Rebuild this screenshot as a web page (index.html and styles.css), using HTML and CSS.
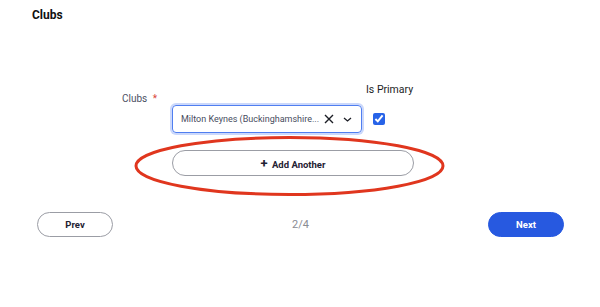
FILE: index.html
```html
<!DOCTYPE html>
<html lang="en">
<head>
  <meta charset="UTF-8" />
  <meta name="viewport" content="width=device-width, initial-scale=1.0" />
  <title>Clubs</title>
  <link rel="stylesheet" href="styles.css">
</head>
<body>
  <h2 class="page-title">Clubs</h2>

  <div class="club-grid">
    <div class="col-head">Is Primary</div>

    <label class="field-label" for="club">Clubs <span class="req">*</span></label>
    <div class="select-box" id="club">
      <span class="select-value">Milton Keynes (Buckinghamshire...</span>
      <svg class="icon-clear" width="10" height="10" viewBox="0 0 10 10">
        <path d="M1 1 L9 9 M9 1 L1 9" stroke="#1c1e26" stroke-width="1.4" fill="none" />
      </svg>
      <svg class="icon-chevron" width="9" height="5" viewBox="0 0 9 5">
        <path d="M1 1 L4.5 4 L8 1" stroke="#1c1e26" stroke-width="1.3" fill="none" />
      </svg>
    </div>
    <div class="primary-cell">
      <input type="checkbox" class="primary-check" checked />
    </div>

    <div class="add-wrap">
      <button type="button" class="add-btn"><span class="plus">+</span> Add Another</button>
      <svg class="highlight" width="312" height="62" viewBox="0 0 312 62">
        <ellipse cx="155.5" cy="31" rx="153.5" ry="28.5" fill="none" stroke="#e0361e" stroke-width="3" />
      </svg>
    </div>
  </div>

  <div class="pager">
    <button type="button" class="btn btn-prev">Prev</button>
    <span class="step">2/4</span>
    <button type="button" class="btn btn-next">Next</button>
  </div>
</body>
</html>
```

FILE: styles.css
```css
body {
  margin: 0;
  font-family: Roboto, "Liberation Sans", sans-serif;
  background: #ffffff;
  color: #1c1e26;
}

.page-title {
  margin: 0;
  padding: 7px 32px 0;
  font-size: 12px;
  line-height: 16px;
  font-weight: 700;
  color: #111;
}

.club-grid {
  display: grid;
  grid-template-columns: 172px 190px 60px;
  row-gap: 8px;
  margin-top: 60px;
}

.col-head {
  grid-column: 3;
  padding-left: 4px;
  font-size: 10.5px;
  line-height: 14px;
  color: #1c1e26;
  white-space: nowrap;
}

.field-label {
  grid-column: 1;
  justify-self: end;
  margin-top: -13px;
  padding-right: 15px;
  font-size: 10px;
  line-height: 13px;
  color: #4b5063;
}

.req {
  color: #d9453a;
  margin-left: 3px;
}

.select-box {
  grid-column: 2;
  height: 28px;
  box-sizing: border-box;
  display: flex;
  align-items: center;
  padding: 0 9px 0 8px;
  border: 1.5px solid #4f7ef0;
  border-radius: 4px;
  box-shadow: 0 0 0 2px #cbd8fb;
}

.select-value {
  flex: 1;
  font-size: 9px;
  color: #474c5e;
  white-space: nowrap;
}

.icon-clear {
  margin-left: 4px;
}

.icon-chevron {
  margin-left: 9px;
}

.primary-cell {
  grid-column: 3;
  display: flex;
  align-items: center;
  padding-left: 11px;
}

.primary-check {
  margin: 0;
  width: 12px;
  height: 12px;
  accent-color: #2763e8;
}

.add-wrap {
  grid-column: 2 / 4;
  position: relative;
  margin-top: 9px;
}

.add-btn {
  width: 242px;
  height: 26px;
  border: 1px solid #9b9da5;
  border-radius: 13px;
  background: #fff;
  font-family: inherit;
  font-size: 9.5px;
  font-weight: 700;
  color: #1f2233;
  cursor: pointer;
}

.plus {
  font-size: 13px;
  margin-right: 2px;
}

.highlight {
  position: absolute;
  left: -38px;
  top: -15px;
  pointer-events: none;
}

.pager {
  display: flex;
  justify-content: space-between;
  align-items: center;
  margin-top: 36px;
  padding: 0 36px 0 37px;
}

.btn {
  width: 76px;
  height: 25px;
  border-radius: 13px;
  font-family: inherit;
  font-size: 9.5px;
  font-weight: 700;
  cursor: pointer;
}

.btn-prev {
  background: #fff;
  border: 1px solid #9b9da5;
  color: #1f2233;
}

.btn-next {
  background: #2759e0;
  border: 1px solid #2759e0;
  color: #fff;
}

.step {
  font-size: 11px;
  color: #8a8c93;
}
```
